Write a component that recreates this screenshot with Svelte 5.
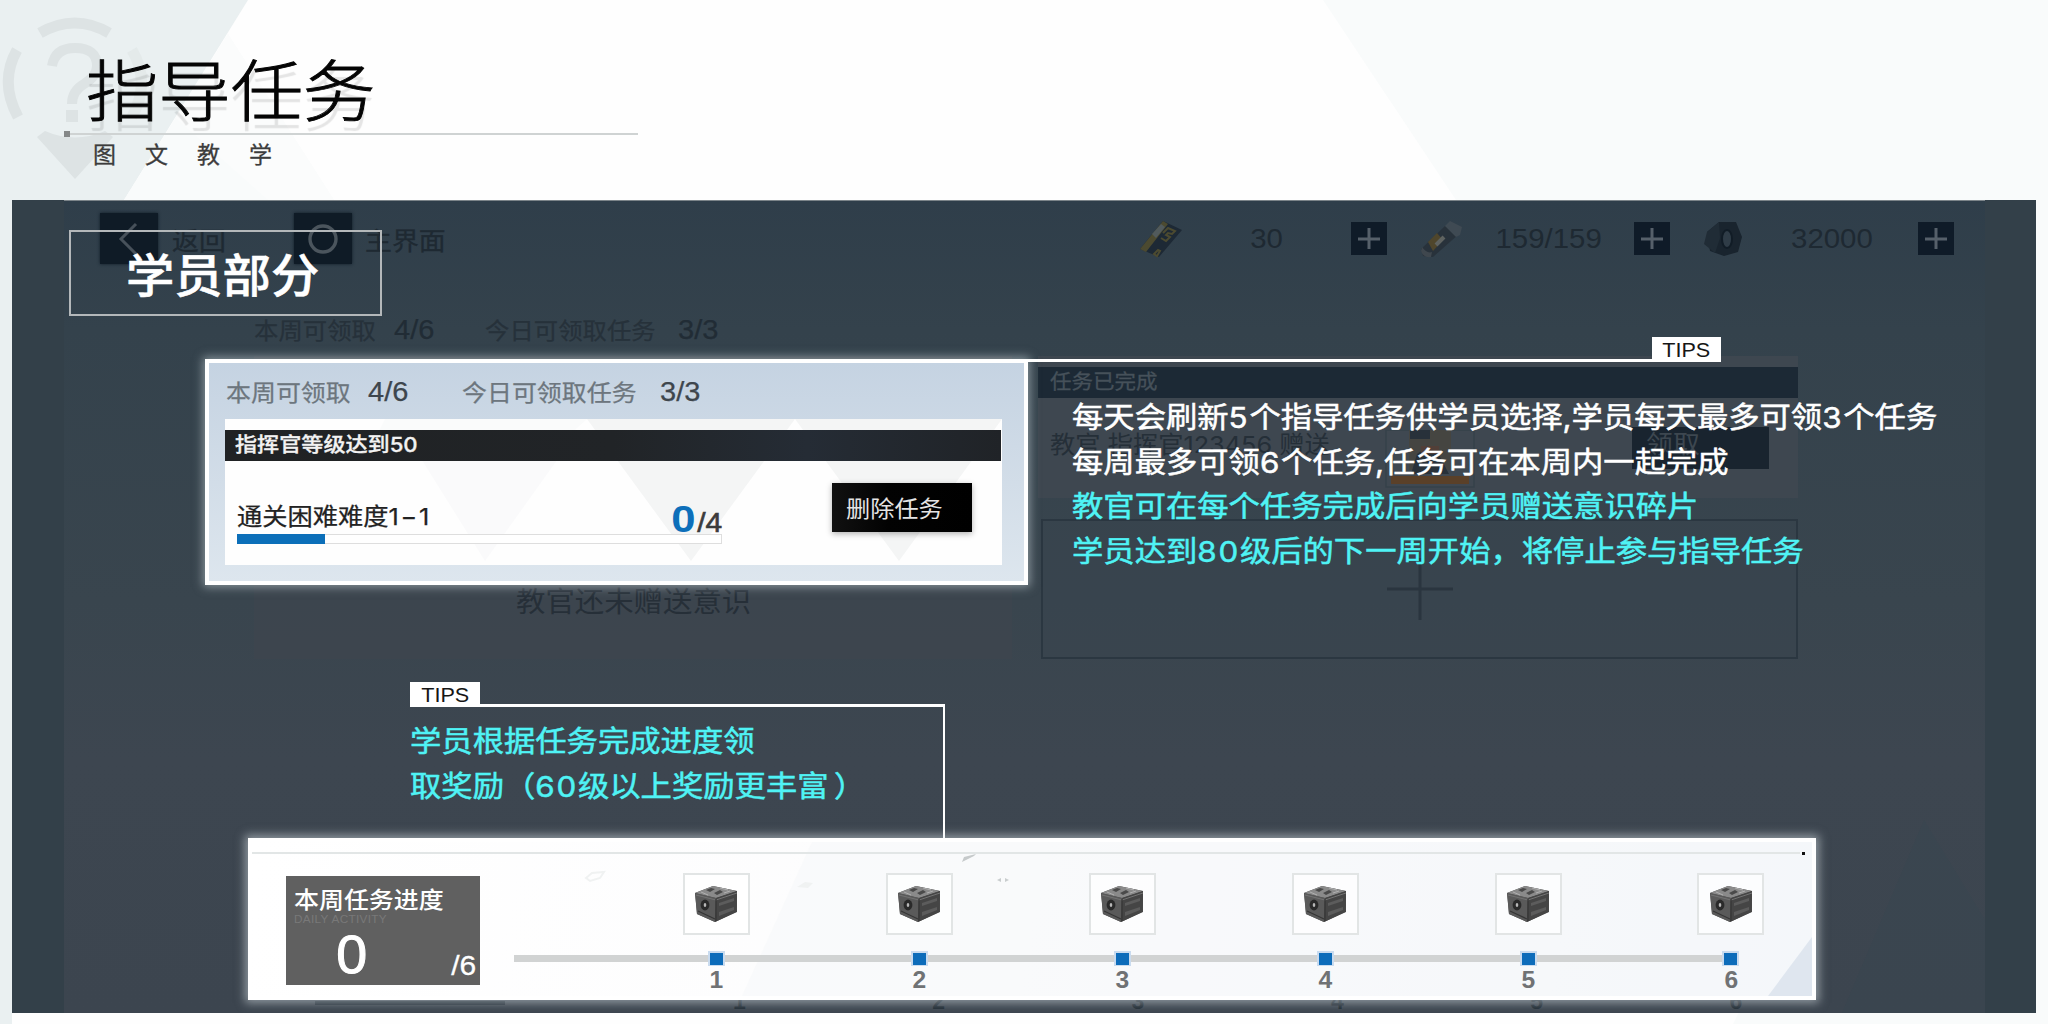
<script>
  const resources = [
    { kind: 'card', value: '30' },
    { kind: 'battery', value: '159/159' },
    { kind: 'nut', value: '32000' }
  ];
  const tips = [
    { text: '每天会刷新5个指导任务供学员选择,学员每天最多可领3个任务', cyan: false },
    { text: '每周最多可领6个任务,任务可在本周内一起完成', cyan: false },
    { text: '教官可在每个任务完成后向学员赠送意识碎片', cyan: true },
    { text: '学员达到80级后的下一周开始，将停止参与指导任务', cyan: true }
  ];
  const rewardTips = ['学员根据任务完成进度领', '取奖励（60级以上奖励更丰富）'];
  const steps = [1, 2, 3, 4, 5, 6];

  // Splits a line so that digits and the closing bracket can be spaced on their own.
  const parts = (line) => line.split(/(\d|）)/).filter(Boolean);
</script>

{#snippet quota()}
  <span class="quota-label first"><span class="w">本周可领取</span></span>
  <span class="quota-num one"><span class="w">4/6</span></span>
  <span class="quota-label second"><span class="w">今日可领取任务</span></span>
  <span class="quota-num"><span class="w">3/3</span></span>
{/snippet}

{#snippet line(text)}<span class="line">{#each parts(text) as p}<span class:digit={/\d/.test(p)} class:close={p === '）'}>{p}</span>{/each}</span>{/snippet}

{#snippet crate()}
  <svg class="crate" viewBox="0 0 44 38">
    <path d="M1 8 19 1 43 6 43 27 21 37 3 29z" fill="#4a4a4a" />
    <path d="M1 8 19 1 43 6 22 13z" fill="#8a8a8a" />
    <path d="M1 8 22 13 21 37 3 29z" fill="#5a5a5a" />
    <path d="M22 13 43 6 42 27 21 37z" fill="#454545" />
    <path d="M25 18 40 13v3L25 21zM25 27l15-5v3l-15 6z" fill="#5c5c5c" />
    <path d="M12 5l5-2 4 1-5 3zM20 8l6-3 3 2-6 3z" fill="#4a4a4a" />
    <path d="M26 3l8 2M7 7l7 3M30 8l6-2" stroke="#b0b0b0" stroke-width="1" />
    <path d="M2 10 22 15 43 8" fill="none" stroke="#727272" stroke-width="1" />
    <path d="M4 26l17 8M22 14v22" stroke="#363636" stroke-width="1.2" />
    <ellipse cx="11" cy="20" rx="4.4" ry="5.4" fill="#2a2a2a" />
    <ellipse cx="11" cy="20" rx="1.3" ry="2" fill="#b8b8b8" />
  </svg>
{/snippet}

<div class="page">
  <svg class="backdrop" viewBox="0 0 2048 1024">
    <path d="M0 0H248L124 200H12V1024H0z" fill="#eaf0f1" />
    <path d="M228 34 124 200H334z" fill="#f9fbfb" />
    <path d="M228 34 176 118 268 200H334z" fill="#fbfcfc" />
    <path d="M1323 0H2048V1024H1733L1745 1000 1456 200z" fill="#f9fbfb" />
    <g fill="none" stroke="#dde3e4" stroke-width="11">
      <path d="M40 33Q75 13 109 33" />
      <path d="M17 50Q-1 82 18 117" />
      <path d="M132 50Q151 82 132 117" opacity=".5" />
      <path d="M52 66Q55 48 75 48 97 48 97 66 97 76 84 84 72 91 72 104" stroke-width="10" />
    </g>
    <path d="M66 110h12v12h-12zM37 137l8-6Q75 144 105 131l8 6-38 42z" fill="#dde3e4" />
  </svg>

  <header>
    <h1><span class="w">指导任务</span></h1>
    <div class="rule"></div>
    <p>图文教学</p>
  </header>

  <main>
    <div class="dimmed">
      <svg class="facets" viewBox="0 0 2024 813">
        <path d="M0 0H52V813H0zM1973 0H2024V813H1973z" fill="#334049" />
        <path d="M1912 620 1973 720V813H1830z" fill="#37454f" opacity=".5" />
      </svg>
      <div class="topbar">
        <span class="key"><svg viewBox="0 0 58 51"><path d="M36 11 21 26 36 41" fill="none" stroke="#47515a" stroke-width="3" /></svg></span>
        <span class="nav back"><span class="w">返回</span></span>
        <span class="key"><svg viewBox="0 0 58 51"><circle cx="29" cy="26" r="13" fill="none" stroke="#4b555d" stroke-width="3.4" /></svg></span>
        <span class="nav"><span class="w">主界面</span></span>
        <div class="resources">
          {#each resources as r}
            <div class="res {r.kind}">
              <svg class="res-icon" viewBox="0 0 44 38">
                {#if r.kind === 'card'}
                  <path d="M1 29 24 1 43 10 20 37z" fill="#1d2935" />
                  <path d="M1 29 24 1 29 4 7 32z" fill="#4c4a30" />
                  <path d="M13 14l9-10 4 3-9 11z" fill="#515a5c" />
                  <path d="M24 13l5-5 7 3-3 3-4-1-2 2 4 2-4 4-5-3M15 34l4-4 2 1-3 5z" fill="none" stroke="#4c4a30" stroke-width="2" />
                {:else if r.kind === 'battery'}
                  <path d="M2 29 26 6 40 14 14 37 4 36z" fill="#28323b" />
                  <path d="M9 22 18 13 24 20 14 31z" fill="#4f462c" />
                  <path d="M17 25 25 17" stroke="#5f6361" stroke-width="4" />
                  <path d="M26 6l5-5 12 6-2 8-4 2z" fill="#3f4a53" />
                  <path d="M3 27q5 7 10 5l-1 5q-8 1-10-6z" fill="#3f474e" />
                {:else}
                  <path d="M5 12 17 2 34 2 40 17 36 32 22 36 8 31z" fill="#19242e" />
                  <path d="M5 12 17 2 18 18 13 33 2 24z" fill="#202c36" />
                  <ellipse cx="25" cy="19" rx="5" ry="9" fill="#2f3c47" stroke="#111c26" stroke-width="2" />
                {/if}
              </svg>
              <span class="amount"><span>{r.value}</span></span>
              <svg class="plus" viewBox="0 0 36 33"><path d="M0 0h36v33H0z" fill="#0f1b28" /><path d="M18 6v21M7 17h22" stroke="#56606a" stroke-width="3" /></svg>
            </div>
          {/each}
        </div>
      </div>
      <div class="quota ghost">{@render quota()}</div>
      <div class="boards">
        <div class="left-board"><span>教官还未赠送意识</span></div>
        <div class="right-board">
          <div class="done">
            <div class="done-title"><span class="w">任务已完成</span></div>
            <div class="done-body">
              <span class="giver"><span class="w">教官 指挥官123456 赠送</span></span>
              <svg class="gift" viewBox="0 0 90 58">
                <path d="M1 0h88v57H1z" fill="#3f4851" stroke="#36414a" stroke-width="1.5" />
                <path d="M24 0h42v40H24z" fill="#454541" />
                <path d="M25 0h20v9H25zM32 24q12-10 22 1l10 19H26z" fill="#28313a" />
                <path d="M36 16h18v8H36z" fill="#513f38" />
                <path d="M6 46h78v8H6z" fill="#5a4028" />
              </svg>
              <span class="claim"><span class="w">领取</span></span>
            </div>
          </div>
          <div class="empty">
            <svg viewBox="0 0 66 62"><path d="M33 0v62M0 31h66" stroke="#2a353f" stroke-width="3" /></svg>
          </div>
        </div>
      </div>
      <div class="echo">
        <i></i>
        {#each steps as s}<b>{s}</b>{/each}
      </div>
    </div>

    <div class="stage">
      <div class="section-name"><span>学员部分</span></div>

      <div class="first-row">
        <section class="task-panel">
          <div class="quota">{@render quota()}</div>
          <div class="task">
            <svg class="pattern" viewBox="0 0 777 146" preserveAspectRatio="none">
              <path d="M190 30 340 30 260 142z" fill="#fafafb" />
              <path d="M362 0H570L466 142zM570 0H777L674 142z" fill="#f4f5f5" />
              <path d="M160 0H362L340 20H150z" fill="#fafbfb" />
            </svg>
            <div class="task-title"><span class="w">指挥官等级达到50</span></div>
            <div class="task-body">
              <div class="task-progress">
                <div class="task-line">
                  <span class="w name">通关困难难度<span class="stage-no">1−1</span></span>
                  <span class="count"><b>0</b><em>/4</em></span>
                </div>
                <div class="bar"><i></i></div>
              </div>
              <button><span class="w">删除任务</span></button>
            </div>
          </div>
        </section>
        <div class="tips-right">
          <div class="tips-head"><i></i><span class="tag"><span>TIPS</span></span></div>
          <ul>
            {#each tips as t}
              <li class:cyan={t.cyan}>{@render line(t.text)}</li>
            {/each}
          </ul>
        </div>
      </div>

      <div class="tips-bottom">
        <div class="tips-head"><span class="tag"><span>TIPS</span></span><i></i></div>
        <ul>
          {#each rewardTips as t}
            <li class="cyan">{@render line(t)}</li>
          {/each}
        </ul>
      </div>

      <section class="week-panel">
        <svg class="pattern" viewBox="0 0 1560 154" preserveAspectRatio="none">
          <path d="M560 0H1560V154H490z" fill="#f5f7fa" opacity=".5" />
          <path d="M1560 95V154H1516z" fill="#dfe6ef" />
          <path d="M710 20l12-6 2-2-12 3z" fill="#c6cacb" />
          <path d="M745 38l4-2v4zM753 36l4 2-4 2z" fill="#c9cdce" />
          <path d="M334 36l6-5 12-1-4 6-10 3z" fill="none" stroke="#f0f2f2" stroke-width="2" />
          <path d="M545 45l8-5 8 1-5 5z" fill="#f0f2f2" />
        </svg>
        <div class="week-rule"><i></i></div>
        <div class="week-body">
          <div class="week-total">
            <strong><span class="w">本周任务进度</span></strong>
            <small>DAILY ACTIVITY</small>
            <div><b>0</b><em>/6</em></div>
          </div>
          <div class="track">
            {#each steps as s}
              <div class="step">
                <div class="frame">{@render crate()}</div>
                <div class="node"><i></i></div>
                <b>{s}</b>
              </div>
            {/each}
          </div>
        </div>
      </section>
    </div>
  </main>
</div>

<style>
  :global(body) { margin: 0; }
  * { box-sizing: border-box; }
  i, em { font-style: normal; }
  .page {
    position: relative; width: 2048px; height: 1024px; overflow: hidden; background: #fefefe;
    font-family: "Liberation Sans", "Noto Sans CJK SC", sans-serif; white-space: nowrap;
  }
  .w { display: inline-block; transform: scaleX(1.075); transform-origin: 0 50%; }
  .backdrop, .facets, .pattern { position: absolute; left: 0; top: 0; width: 100%; height: 100%; }
  svg { display: block; }

  header { position: relative; height: 200px; padding: 44px 0 0 86px; }
  h1 {
    margin: 0; height: 87px; font: 300 67px/86px "Noto Sans CJK SC", sans-serif; color: #050505;
    -webkit-text-stroke: .9px #050505; text-shadow: 0 10px 1px rgba(0, 0, 0, .1);
  }
  h1 .w { transform: scaleX(1.08); }
  .rule { width: 574px; height: 6px; margin-left: -22px; background: linear-gradient(#cfd3d3, #cfd3d3) 6px 2px / 568px 2px no-repeat, linear-gradient(#858888, #858888) 0 0 / 6px 6px no-repeat; }
  header p { margin: 3px 0 0 7px; font: 400 23px/26px "Noto Sans CJK SC", sans-serif; letter-spacing: 29px; color: #3c3c3c; -webkit-text-stroke: .3px #3c3c3c; }

  main {
    position: relative; width: 2024px; height: 813px; margin-left: 12px; overflow: hidden;
    background: linear-gradient(#2f3e4a 0, #34424c 130px, #39454e 400px, #3d4650 560px, #3c454f 100%);
    box-shadow: inset 0 1px #7c8489;
  }
  .dimmed { position: absolute; left: 0; top: 0; width: 100%; height: 100%; color: #1e2932; }
  .topbar { position: relative; display: flex; align-items: center; height: 77px; padding-left: 88px; }
  .key { width: 58px; height: 51px; background: #0f1b26; box-shadow: 0 0 3px #0f1b26; }
  .nav { width: 84px; margin-left: 13px; font-size: 25px; -webkit-text-stroke: .3px; }
  .nav.back { width: 122px; margin-left: 14px; }
  .resources { display: flex; position: relative; margin-left: 690px; }
  .res { display: flex; align-items: center; height: 40px; margin-right: 32px; }
  .res-icon { width: 44px; height: 38px; }
  .amount { font-size: 28px; text-align: center; }
  .amount span { display: inline-block; transform: scaleX(1.05); }
  .plus { width: 36px; height: 33px; }
  .card .amount { width: 168px; }
  .battery .amount { width: 171px; }
  .nut .amount { width: 172px; padding-right: 1px; }

  .quota { display: flex; align-items: center; height: 32px; font-size: 23px; color: #6d767e; -webkit-text-stroke: .25px; }
  .quota-num { font-size: 27px; color: #3e464d; }
  .quota-label.first { width: 142px; }
  .quota-num.one { width: 94px; }
  .quota-label.second { width: 198px; }
  .task-panel .quota-label .w { transform: scaleX(1.085); margin-top: -2px; }
  .ghost { position: relative; margin: 37px 0 0 242px; font-size: 23px; color: #26313a; }
  .ghost .quota-num { color: #212c35; }
  .ghost .quota-label.first { width: 140px; }
  .ghost .quota-num.one { width: 91px; }
  .ghost .quota-label.second { width: 193px; }
  .ghost .quota-label .w { transform: scaleX(1.06); margin-top: -2px; }

  .boards { position: relative; display: flex; margin: 10px 0 0 242px; height: 303px; }
  .left-board { width: 758px; margin-right: 26px; background: rgba(64, 70, 79, .55); padding: 229px 0 0 262px; font-size: 28px; line-height: 36px; color: #262f38; }
  .left-board span { display: inline-block; transform: scaleX(1.05); transform-origin: 0 50%; }
  .right-board { width: 760px; }
  .done { height: 142px; padding-top: 11px; background: #3e4750; }
  .done-title { height: 31px; padding-left: 12px; background: #1c2935; color: #46515a; font-size: 20px; line-height: 31px; -webkit-text-stroke: .3px; }
  .done-body { display: flex; align-items: center; height: 100px; padding-left: 12px; }
  .giver { width: 335px; margin-top: -6px; font: 400 23.5px/30px Inter, "Noto Sans CJK SC", sans-serif; color: #252f38; }
  .gift { width: 90px; height: 58px; margin-top: 22px; }
  .claim { width: 137px; height: 42px; margin-left: 157px; padding-left: 14px; background: #19242f; color: #3d4750; font-size: 25px; line-height: 34px; }
  .empty { display: flex; justify-content: center; align-items: center; width: 757px; height: 140px; margin: 21px 0 0 3px; border: 2px solid #2b3741; background: rgba(55, 67, 77, .5); }
  .empty svg { width: 66px; height: 62px; }
  .echo { position: relative; display: flex; margin-top: 342px; padding-left: 303px; height: 20px; }
  .echo i { width: 190px; height: 4px; margin-right: 135px; background: #222d37; }
  .echo b { width: 199.3px; padding-left: 93px; margin-top: -9px; font: 700 23px/18px "Liberation Sans", sans-serif; color: #1f2a33; }

  .stage { position: relative; display: flex; flex-direction: column; padding-top: 30px; }
  .section-name { width: 313px; height: 86px; margin-left: 57px; padding-left: 55px; border: 2px solid #b4b8ba; color: #fff; font: 500 46px/80px "Noto Sans CJK SC", sans-serif; -webkit-text-stroke: .6px #fff; }
  .section-name span { display: inline-block; transform: scaleX(1.05); transform-origin: 0 50%; }

  .first-row { display: flex; margin: 21px 0 0 193px; height: 345px; }
  .task-panel { width: 823px; height: 226px; margin-top: 22px; padding: 13px 16px; border: 4px solid #fff; background: linear-gradient(#c5d3e2, #d2dde8 55%, #dde6ee); box-shadow: 0 0 9px 2px rgba(215, 228, 232, .5); }
  .task { position: relative; width: 777px; height: 146px; margin-top: 11px; padding-top: 11px; background: #fefefe; }
  .task-panel .quota { padding-left: 1px; }
  .task-title { position: relative; width: 776px; height: 31px; padding-left: 10px; background: linear-gradient(90deg, #202224, #212427 50%, #252c35 75%, #202327); color: #f2f2f2; font: 500 20px/30px Inter, "Noto Sans CJK SC", sans-serif; -webkit-text-stroke: .3px; }
  .task-title .w { transform: scaleX(1.105); }
  .task-body { position: relative; display: flex; padding: 22px 30px 0 12px; justify-content: space-between; }
  .task-progress { width: 485px; }
  .task-line { display: flex; justify-content: space-between; height: 51px; padding-top: 7px; }
  .name { height: 44px; font: 400 23.5px/60px Inter, "Noto Sans CJK SC", sans-serif; margin-top: -3px; color: #222; -webkit-text-stroke: .25px; }
  .stage-no { letter-spacing: 1.6px; }
  .count { display: flex; align-items: baseline; line-height: 61px; margin-top: -1px; }
  .count b { font-size: 37px; color: #0d6fba; margin-right: 4px; transform: translateX(-1px) scaleX(1.18); }
  .count em { font-size: 28px; color: #3b3b3b; -webkit-text-stroke: .6px #3b3b3b; transform: translateX(-1px) scaleX(1.07); }
  .bar { height: 10px; border: 1px solid #dedede; background: #fff; }
  .bar i { display: block; width: 18.2%; height: 10px; margin: -1px; background: #0c6fb9; }
  button { width: 140px; height: 49px; padding: 0 0 0 14px; border: 0; text-align: left; background: linear-gradient(90deg, #111, #020202 40%, #000); color: #e4e4e4; font: 400 22.5px/41px "Noto Sans CJK SC", sans-serif; box-shadow: 0 2px 6px rgba(0, 0, 0, .3); }
  button .w { margin-top: -4px; }

  .tips-head { display: flex; align-items: flex-end; height: 25px; }
  .tips-head i { height: 3px; background: #fff; }
  .tag { height: 25px; background: #fff; color: #161616; font-size: 20px; line-height: 26px; text-align: center; }
  .tag span { display: inline-block; transform: scaleX(1.08); }
  .tips-right .tips-head i { width: 624px; }
  .tips-right .tag { width: 69px; }
  ul { margin: 0; padding: 0; list-style: none; }
  li { height: 44.6px; color: #fff; font: 400 29px/44.6px Inter, "Noto Sans CJK SC", sans-serif; -webkit-text-stroke: .5px; }
  li.cyan { color: #4ff3f5; }
  .line { display: inline-block; transform: scaleX(1.08); transform-origin: 0 50%; }
  .digit { letter-spacing: 1.6px; }
  .close { margin-left: 5px; }
  .tips-right ul { padding: 34px 0 0 44px; }
  .tips-bottom { width: 535px; height: 156px; margin-left: 398px; background: linear-gradient(#fff, #fff) 100% 100% / 2px 133px no-repeat; }
  .tips-bottom .tag { width: 70px; }
  .tips-bottom .tips-head i { flex: 1; }
  .tips-bottom ul { padding-top: 13px; }

  .week-panel { position: relative; width: 1568px; height: 162px; margin-left: 236px; border: 4px solid #fff; background: linear-gradient(100deg, #fff, #fcfcfd 50%, #f3f6fa); box-shadow: 0 0 9px 3px rgba(230, 238, 242, .5); }
  .week-rule { position: relative; display: flex; justify-content: flex-end; width: 1553px; height: 3px; margin-top: 10px; background: linear-gradient(#e2e6e6, #e2e6e6) 0 0 / 1548px 2px no-repeat; }
  .week-rule i { width: 3px; height: 3px; background: #111; }
  .week-body { position: relative; display: flex; }
  .week-total { flex: none; width: 194px; height: 109px; margin: 21px 34px 0 34px; padding: 8px 5px 0 8px; background: #606060; color: #fff; }
  strong { display: block; font: 500 23px/28px "Noto Sans CJK SC", sans-serif; }
  strong .w { transform: scaleX(1.085); }
  small { display: block; width: max-content; height: 12px; margin-top: 1px; font-size: 11px; line-height: 12px; color: #787878; letter-spacing: .3px; transform: scaleX(1.07); transform-origin: 0 50%; }
  .week-total div { display: flex; justify-content: space-between; align-items: baseline; padding-left: 43px; height: 58px; line-height: 59px; }
  .week-total div b { font-weight: 400; font-size: 53px; -webkit-text-stroke: 1px #fff; transform: scaleX(1.05); }
  .week-total div em { font-size: 28px; transform: translateY(2px) scaleX(1.07); -webkit-text-stroke: .3px; }
  .track { flex: none; display: flex; padding-left: 101px; height: 140px; background: linear-gradient(#d1d3d3, #d1d3d3) 0 100px / 1217px 7px no-repeat; }
  .step { width: 202.9px; display: flex; flex-direction: column; align-items: center; padding-top: 18px; }
  .frame { display: flex; align-items: center; justify-content: center; width: 67px; height: 62px; border: 2px solid #e2e5e5; background: rgba(255, 255, 255, .7); }
  .crate { width: 44px; height: 38px; }
  .node { display: flex; align-items: center; justify-content: center; width: 17px; height: 15px; margin-top: 16px; background: #c9dbef; }
  .node i { width: 13px; height: 12px; background: #0d6cba; }
  .step b { margin-top: 4px; font: 700 23px/20px "Liberation Sans", sans-serif; color: #707274; transform: scaleX(1.07); }
</style>
